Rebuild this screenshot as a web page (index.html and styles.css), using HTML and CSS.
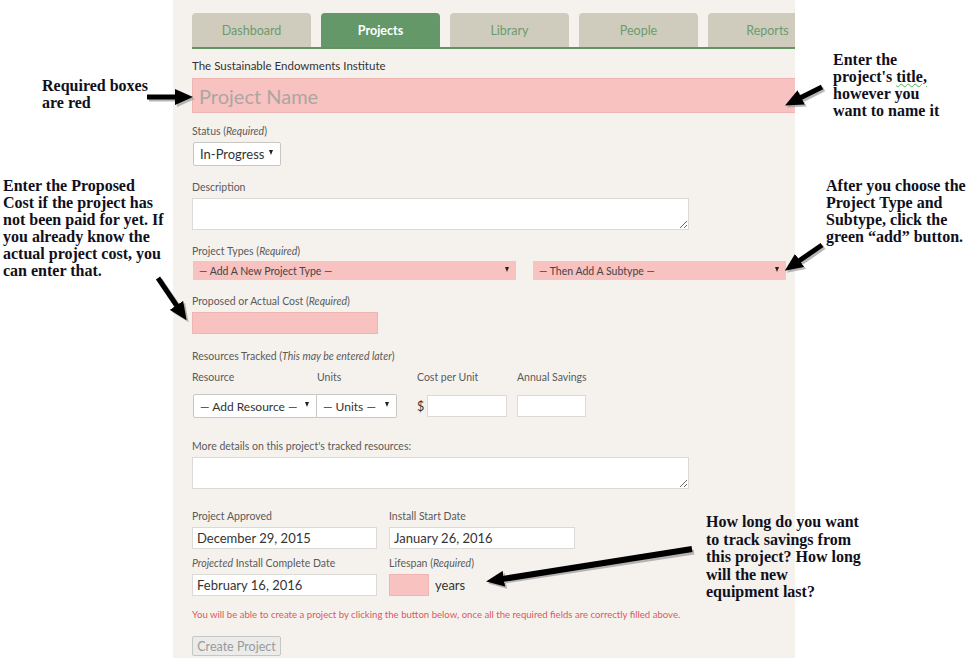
FILE: index.html
```html
<!DOCTYPE html>
<html>
<head>
<meta charset="utf-8">
<link rel="stylesheet" href="styles.css">
</head>
<body>
<div class="page">
  <div class="panel">
    <nav class="tabs">
      <div class="tab">Dashboard</div>
      <div class="tab active">Projects</div>
      <div class="tab">Library</div>
      <div class="tab">People</div>
      <div class="tab">Reports</div>
    </nav>
    <div class="org">The Sustainable Endowments Institute</div>
    <input class="title-input" type="text" placeholder="Project Name">

    <div class="lbl mt-status">Status (<i>Required</i>)</div>
    <div class="select status"><span>In-Progress</span><span class="caret"></span></div>

    <div class="lbl mt-14">Description</div>
    <textarea class="area"></textarea>

    <div class="lbl mt-14">Project Types (<i>Required</i>)</div>
    <div class="types">
      <div class="select pink type1"><span>— Add A New Project Type —</span><span class="caret"></span></div>
      <div class="select pink type2"><span>— Then Add A Subtype —</span><span class="caret"></span></div>
    </div>

    <div class="lbl mt-14">Proposed or Actual Cost (<i>Required</i>)</div>
    <input class="cost" type="text">

    <div class="lbl mt-15">Resources Tracked (<i>This may be entered later</i>)</div>
    <div class="res-head">
      <div class="c1">Resource</div>
      <div class="c2">Units</div>
      <div class="c3">Cost per Unit</div>
      <div class="c4">Annual Savings</div>
    </div>
    <div class="res-row">
      <div class="select res1"><span>— Add Resource —</span><span class="caret"></span></div>
      <div class="select res2"><span>— Units —</span><span class="caret"></span></div>
      <span class="dollar">$</span>
      <input class="small-in cpu" type="text">
      <input class="small-in sav" type="text">
    </div>

    <div class="lbl mt-21">More details on this project's tracked resources:</div>
    <textarea class="area area2"></textarea>

    <div class="dates mt-20">
      <div class="col">
        <div class="lbl">Project Approved</div>
        <input class="date" type="text" value="December 29, 2015">
      </div>
      <div class="col">
        <div class="lbl">Install Start Date</div>
        <input class="date" type="text" value="January 26, 2016">
      </div>
    </div>
    <div class="dates mt-7">
      <div class="col">
        <div class="lbl"><i>Projected</i> Install Complete Date</div>
        <input class="date" type="text" value="February 16, 2016">
      </div>
      <div class="col">
        <div class="lbl">Lifespan (<i>Required</i>)</div>
        <div class="life"><input class="life-in" type="text"><span class="years">years</span></div>
      </div>
    </div>

    <p class="warn">You will be able to create a project by clicking the button below, once all the required fields are correctly filled above.</p>
    <button class="create">Create Project</button>
  </div>

  <div class="note n-req">Required boxes<br>are red</div>
  <div class="note n-title">Enter the<br>project's <span class="spell">title,</span><br>however you<br>want to name it</div>
  <div class="note n-cost">Enter the Proposed<br>Cost if the project has<br>not been paid for yet. If<br>you already know the<br>actual project cost, you<br>can enter that.</div>
  <div class="note n-type">After you choose the<br>Project Type and<br>Subtype, click the<br>green “add” button.</div>
  <div class="note n-life">How long do you want<br>to track savings from<br>this project? How long<br>will the new<br>equipment last?</div>

  <svg class="arrows" width="971" height="658" viewBox="0 0 971 658">
    <defs>
      <marker id="ah" markerWidth="18" markerHeight="16" refX="8" refY="8" orient="auto" markerUnits="userSpaceOnUse">
        <path d="M0,0 L18,8 L0,16 z" fill="#000"/>
      </marker>
      <marker id="ahs" markerWidth="18" markerHeight="16" refX="8" refY="8" orient="auto" markerUnits="userSpaceOnUse">
        <path d="M0,0 L18,8 L0,16 z" fill="#9a9a9a"/>
      </marker>
    </defs>
    <g opacity="0.7">
      <line x1="149" y1="99" x2="185" y2="99" stroke="#9a9a9a" stroke-width="5" marker-end="url(#ahs)"/>
      <line x1="824" y1="89" x2="796" y2="103" stroke="#9a9a9a" stroke-width="5" marker-end="url(#ahs)"/>
      <line x1="160" y1="280" x2="183" y2="314" stroke="#9a9a9a" stroke-width="5" marker-end="url(#ahs)"/>
      <line x1="824" y1="247" x2="795" y2="267" stroke="#9a9a9a" stroke-width="5" marker-end="url(#ahs)"/>
      <line x1="694" y1="552" x2="498" y2="582" stroke="#9a9a9a" stroke-width="5" marker-end="url(#ahs)"/>
    </g>
    <line x1="147" y1="97" x2="183" y2="97" stroke="#000" stroke-width="5" marker-end="url(#ah)"/>
    <line x1="822" y1="87" x2="794" y2="101" stroke="#000" stroke-width="5" marker-end="url(#ah)"/>
    <line x1="158" y1="278" x2="181" y2="312" stroke="#000" stroke-width="5" marker-end="url(#ah)"/>
    <line x1="822" y1="245" x2="793" y2="265" stroke="#000" stroke-width="5" marker-end="url(#ah)"/>
    <line x1="692" y1="549" x2="496" y2="580" stroke="#000" stroke-width="6" marker-end="url(#ah)"/>
  </svg>
</div>
</body>
</html>
```

FILE: styles.css
```css
* { box-sizing: border-box; }
html, body { margin: 0; padding: 0; background: #fff; }
body { font-family: Lato, "Open Sans", sans-serif; color: #333; }

.page {
  position: relative;
  width: 971px;
  height: 658px;
  overflow: hidden;
  background: #fff;
}

.panel {
  margin-left: 173px;
  width: 622px;
  height: 658px;
  background: #f5f2ee;
  padding: 13px 0 0 19px;
  overflow: hidden;
}

.tabs {
  display: flex;
  gap: 10px;
  border-bottom: 2px solid #619462;
  width: 640px;
}
.tab {
  flex: 0 0 119px;
  height: 34px;
  border-radius: 4px 4px 0 0;
  background: #cfccbe;
  color: #6b9b6d;
  font-size: 12.5px;
  display: flex;
  align-items: center;
  justify-content: center;
}
.tab.active { background: #659868; color: #fff; font-weight: 700; }

.org { font-size: 11.5px; line-height: 14px; margin-top: 10px; color: #333; }

.title-input {
  display: block;
  margin-top: 5px;
  width: 640px;
  height: 35px;
  border: 1px solid #efb5b3;
  background: #f8c2c0;
  font-family: Lato, sans-serif;
  font-size: 20px;
  padding: 0 6px;
  outline: none;
}
.title-input::placeholder { color: #aba6a3; }

.lbl { font-size: 10.5px; line-height: 14px; color: #5a5a5a; }
.lbl i { font-style: italic; }
.mt-status { margin-top: 11px; }
.mt-14 { margin-top: 14px; }
.mt-15 { margin-top: 15px; }
.mt-20 { margin-top: 20px; }
.mt-21 { margin-top: 21px; }
.mt-7 { margin-top: 7px; }

.select {
  display: flex;
  align-items: center;
  justify-content: space-between;
  font-size: 12px;
  color: #333;
  background: #fff;
  border: 1px solid #c9c7c3;
  border-radius: 2px;
  padding: 0 7px 0 6px;
}
.caret {
  width: 0; height: 0;
  border-left: 2.5px solid transparent;
  border-right: 2.5px solid transparent;
  border-top: 5px solid #222;
  margin-top: -3px;
}
.status {
  margin: 4px 0 0 1px;
  width: 88px;
  height: 24px;
  font-size: 13px;
}

.area {
  display: block;
  margin-top: 4px;
  width: 497px;
  height: 32px;
  border: 1px solid #dcdad6;
  background: #fff;
  resize: both;
}

.types { display: flex; margin-top: 3px; gap: 17px; padding-left: 1px; }
.pink { background: #f8c2c0; border: none; border-radius: 0; font-size: 10.5px; color: #444; }
.type1 { width: 323px; height: 19px; }
.type2 { width: 253px; height: 19px; }

.cost {
  display: block;
  margin-top: 4px;
  width: 186px;
  height: 22px;
  background: #f8c2c0;
  border: 1px solid #efb5b3;
}

.res-head { display: flex; margin-top: 7px; font-size: 10.5px; line-height: 14px; color: #5a5a5a; }
.res-head .c1 { width: 125px; }
.res-head .c2 { width: 100px; }
.res-head .c3 { width: 100px; }

.res-row { display: flex; align-items: center; margin-top: 10px; padding-left: 1px; height: 24px; }
.res-row .select { height: 24px; font-size: 12px; }
.res1 { width: 124px; border-radius: 2px 0 0 2px; }
.res2 { width: 80px; border-left: none; border-radius: 0 2px 2px 0; }
.dollar { margin-left: 20px; width: 10px; font-size: 12.5px; color: #333; }
.small-in {
  height: 22px;
  border: 1px solid #dcdad6;
  background: #fff;
}
.cpu { width: 80px; }
.sav { width: 69px; margin-left: 10px; }

.dates { display: flex; }
.dates .col { width: 197px; }
.date {
  display: block;
  margin-top: 4px;
  width: 185px;
  height: 22px;
  border: 1px solid #dcdad6;
  background: #fff;
  font-family: Lato, sans-serif;
  font-size: 13px;
  color: #333;
  padding: 0 4px;
}
.dates .col:nth-child(2) .date { width: 186px; }
.life { display: flex; align-items: center; margin-top: 4px; height: 22px; }
.life-in { width: 40px; height: 22px; background: #f8c2c0; border: 1px solid #efb5b3; }
.years { margin-left: 6px; font-size: 13px; color: #333; }

.warn {
  margin: 13px 0 0;
  font-size: 9.6px;
  line-height: 12px;
  color: #e0575c;
  white-space: nowrap;
}

.create {
  display: block;
  margin-top: 15px;
  width: 89px;
  height: 20px;
  padding: 0;
  font-family: Lato, sans-serif;
  font-size: 12.5px;
  color: #9a9a9a;
  background: #ebebea;
  border: 1px solid #c6c6c4;
  border-radius: 2px;
}

.note {
  position: absolute;
  font-family: "Liberation Serif", "DejaVu Serif", serif;
  font-weight: 700;
  font-size: 16px;
  line-height: 17px;
  color: #10101c;
  white-space: nowrap;
}
.spell { text-decoration: underline wavy #4caf50; text-decoration-thickness: 1px; }
.n-req { left: 42px; top: 77px; }
.n-title { left: 833px; top: 51px; }
.n-cost { left: 3px; top: 177px; }
.n-type { left: 826px; top: 177px; }
.n-life { left: 706px; top: 513px; line-height: 17.5px; }

.arrows { position: absolute; left: 0; top: 0; pointer-events: none; }
```
